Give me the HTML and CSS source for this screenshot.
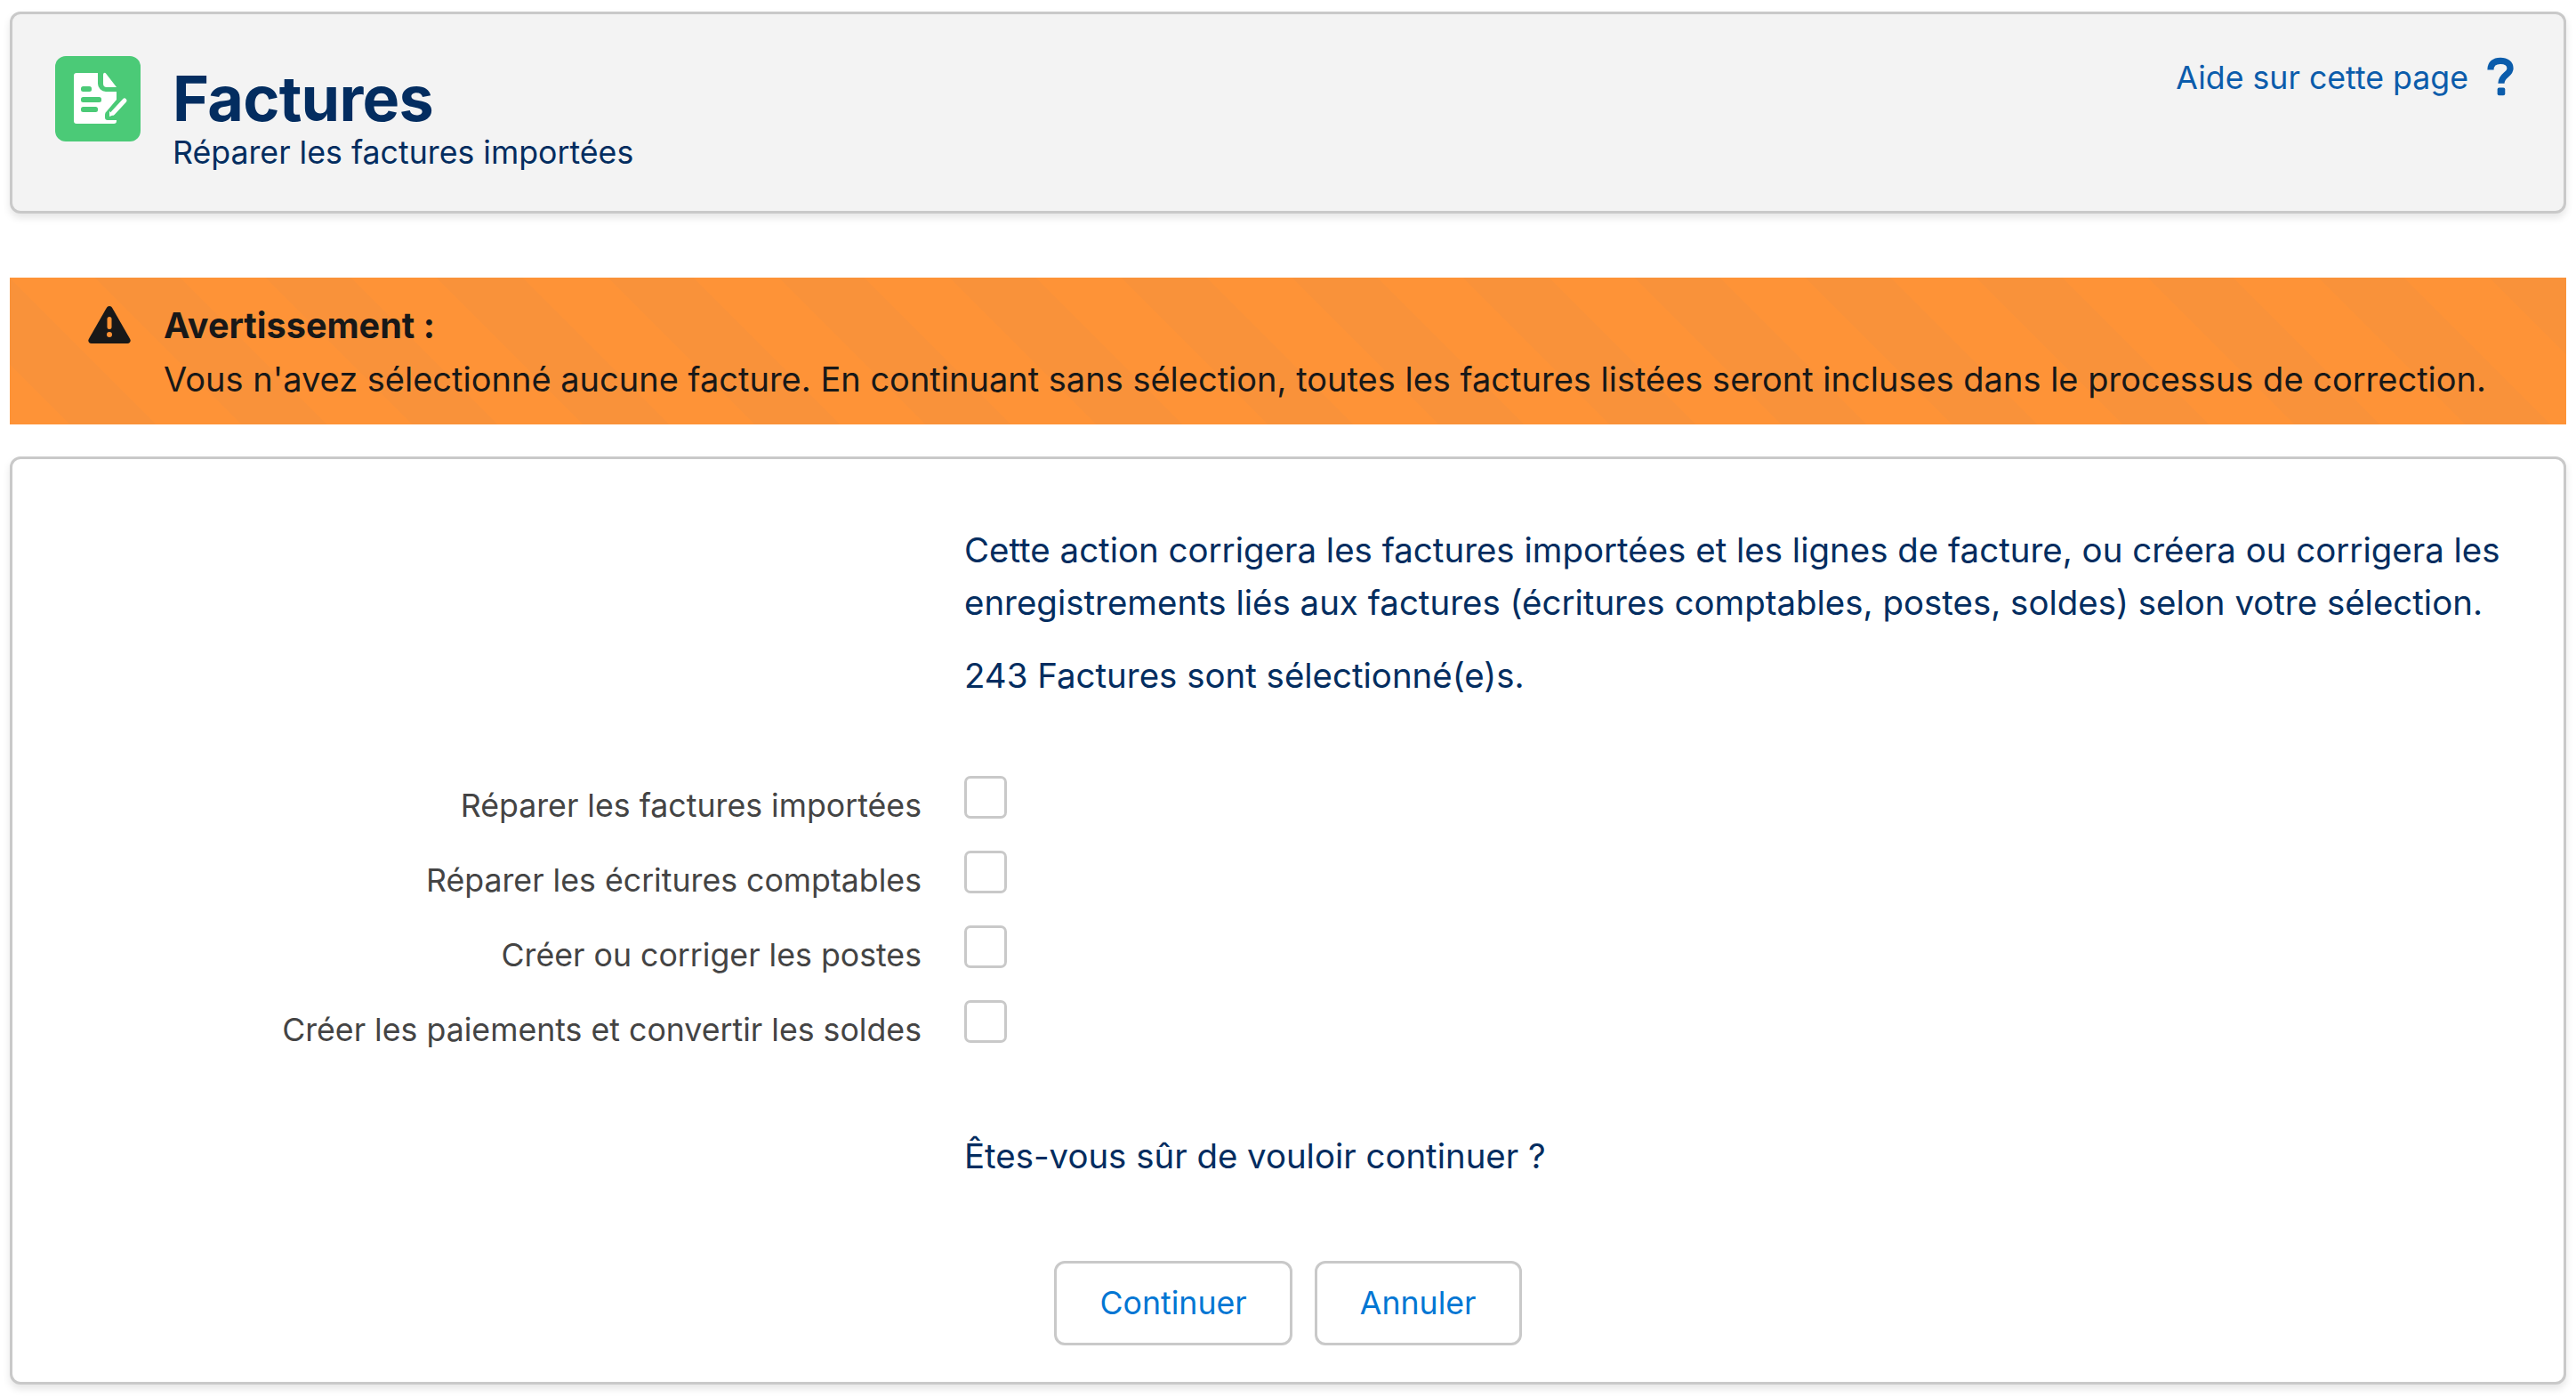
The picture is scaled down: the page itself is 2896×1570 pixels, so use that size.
FILE: index.html
```html
<!DOCTYPE html>
<html lang="fr">
<head>
<meta charset="utf-8">
<title>Factures</title>
<link rel="stylesheet" href="styles.css">
</head>
<body>
<header class="page-header">
  <div class="brand">
    <span class="brand-icon">
      <svg viewBox="0 0 96 96" width="96" height="96" aria-hidden="true">
        <path fill="#fff" d="M24 19h24v12a9 9 0 0 0 9 9h12v9L58 62a5 5 0 0 0-2 4v3a3 3 0 0 0 3 3h10v1a3 3 0 0 1-3 3H24a3 3 0 0 1-3-3V22a3 3 0 0 1 3-3z"/>
        <path fill="#fff" d="M54 21c0-2 2-3 3-1.500L69 35H58a4 4 0 0 1-4-4z"/>
        <path fill="none" stroke="#fff" stroke-width="5" stroke-linecap="round" d="M78 50L65 64"/>
        <path fill="#fff" d="M61 62l5 4-5 2z"/>
        <g fill="#4bca77"><rect x="29" y="34" width="12" height="6" rx="2.500"/><rect x="29" y="46" width="23" height="6" rx="2.500"/><rect x="29" y="57" width="19" height="6" rx="2.500"/></g>
      </svg>
    </span>
    <div class="brand-text">
      <h1 class="title">Factures</h1>
      <p class="subtitle">Réparer les factures importées</p>
    </div>
  </div>
  <a class="help" href="#">
    <span>Aide sur cette page</span>
    <svg class="help-icon" viewBox="0 0 32 48" width="32" height="46" aria-hidden="true">
      <path fill="none" stroke="#0b5cab" stroke-width="7.500" d="M4.500 15C4.500 8 9 4.500 16 4.500S27.500 8 27.500 13.500C27.500 21 17 21 17 31"/>
      <rect x="12.500" y="36" width="9" height="9" rx="2" fill="#0b5cab"/>
    </svg>
  </a>
</header>

<section class="warning">
  <svg class="warning-icon" viewBox="0 0 48 42" width="48" height="42" aria-hidden="true">
    <path fill="#181818" d="M24 0c1.500 0 2.500.8 3.200 2l20 35c1.300 2.300 0 5-3 5H3.800c-3 0-4.300-2.700-3-5l20-35C21.500.8 22.500 0 24 0z"/>
    <rect x="21.500" y="12" width="5" height="14" rx="2.500" fill="#ff9233"/>
    <circle cx="24" cy="32" r="3" fill="#ff9233"/>
  </svg>
  <div class="warning-text">
    <strong>Avertissement :</strong>
    <p>Vous n'avez sélectionné aucune facture. En continuant sans sélection, toutes les factures listées seront incluses dans le processus de correction.</p>
  </div>
</section>

<main class="card">
  <div class="intro">
    <p class="lead">Cette action corrigera les factures importées et les lignes de facture, ou créera ou corrigera les enregistrements liés aux factures (écritures comptables, postes, soldes) selon votre sélection.</p>
    <p class="count">243 Factures sont sélectionné(e)s.</p>
  </div>
  <form class="options">
    <label class="opt-label" for="o1">Réparer les factures importées</label><span class="check" id="o1"></span>
    <label class="opt-label" for="o2">Réparer les écritures comptables</label><span class="check" id="o2"></span>
    <label class="opt-label" for="o3">Créer ou corriger les postes</label><span class="check" id="o3"></span>
    <label class="opt-label" for="o4">Créer les paiements et convertir les soldes</label><span class="check" id="o4"></span>
  </form>
  <p class="confirm">Êtes-vous sûr de vouloir continuer ?</p>
  <div class="actions">
    <button class="btn" type="button">Continuer</button>
    <button class="btn" type="button">Annuler</button>
  </div>
</main>
</body>
</html>
```
FILE: styles.css
```css
* { box-sizing: border-box; }
html, body { margin: 0; background: #fff; }
body {
  height: 1570px;
  overflow: hidden;
  padding: 13px 11px 0 11px;
  font-family: Inter, "Liberation Sans", sans-serif;
  font-size: 35.7px;
  line-height: 60px;
  color: #032d60;
}
p, h1 { margin: 0; }

.page-header {
  height: 227px;
  background: #f3f3f3;
  border: 3px solid #c9c9c9;
  border-radius: 12px;
  box-shadow: 0 5px 8px rgba(0,0,0,.1);
  display: flex;
  justify-content: space-between;
  align-items: flex-start;
  padding: 47px 55px 0 48px;
}
.brand { display: flex; gap: 36px; }
.brand-icon {
  width: 96px; height: 96px;
  background: #4bca77;
  border-radius: 12px;
  display: block;
}
.brand-icon svg { display: block; }
.brand-text { margin-top: 11px; }
.title { font-size: 70px; font-weight: 700; line-height: 74px; letter-spacing: -0.7px; }
.subtitle { line-height: 44px; margin-top: 1px; }
.help {
  display: flex; align-items: center; gap: 20px;
  color: #0b5cab; text-decoration: none;
  line-height: 46px;
  margin-top: 1px;
}
.help-icon { display: block; }

.warning {
  margin-top: 72px;
  height: 165px;
  background: repeating-linear-gradient(45deg, #fe9337 -20px, #fe9337 48px, #f9923a 48px, #f9923a 116px);
  display: flex;
  padding: 30px 0 0 88px;
  color: #181818;
  gap: 37px;
  font-size: 38px;
}
.warning-icon { margin-top: 2px; flex: none; }
.warning-text { line-height: 60px; margin-top: -6px; }
.warning-text strong { font-weight: 700; display: block; font-size: 39.6px; }

.card {
  margin-top: 36px;
  height: 1043px;
  border: 3px solid #c9c9c9;
  border-radius: 12px;
  box-shadow: 0 5px 8px rgba(0,0,0,.1);
  background: #fff;
  padding: 73px 0 0 1070px;
}
.intro { font-size: 38.45px; }
.lead { width: 1770px; line-height: 59px; }
.count { margin-top: 23px; line-height: 59px; }
.options {
  margin: 83px 0 0 -1070px;
  display: grid;
  grid-template-columns: 1022px 48px;
  grid-auto-rows: 84px;
  column-gap: 48px;
}
.opt-label { text-align: right; color: #444; line-height: 60px; padding-top: 3px; }
.check {
  width: 48px; height: 48px;
  border: 3px solid #c9c9c9;
  border-radius: 7px;
  background: #fff;
  display: block;
}
.confirm { margin-top: 61px; line-height: 60px; font-size: 38.4px; }
.actions {
  margin: 88px 0 0 -1070px;
  display: flex;
  justify-content: center;
  gap: 25px;
}
.btn {
  height: 95px;
  padding: 0 48px;
  border: 3px solid #c9c9c9;
  border-radius: 12px;
  background: #fff;
  color: #0176d3;
  font: inherit;
  line-height: 1;
}
```
